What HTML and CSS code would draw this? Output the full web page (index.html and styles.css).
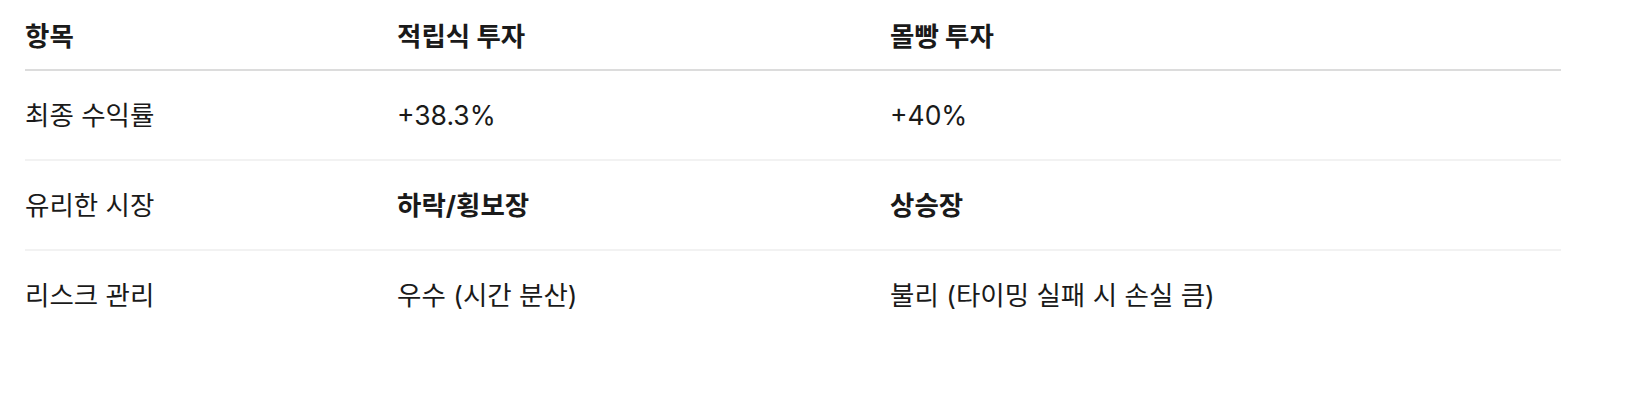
FILE: index.html
```html
<!DOCTYPE html>
<html lang="ko">
<head>
<meta charset="utf-8">
<link rel="stylesheet" href="styles.css">
</head>
<body>
<table class="cmp">
  <colgroup>
    <col class="c1"><col class="c2"><col class="c3">
  </colgroup>
  <thead>
    <tr><th>항목</th><th>적립식 투자</th><th>몰빵 투자</th></tr>
  </thead>
  <tbody>
    <tr><td>최종 수익률</td><td>+38.3%</td><td>+40%</td></tr>
    <tr><td>유리한 시장</td><td><strong>하락/횡보장</strong></td><td><strong>상승장</strong></td></tr>
    <tr><td>리스크 관리</td><td>우수 (시간 분산)</td><td>불리 (타이밍 실패 시 손실 큼)</td></tr>
  </tbody>
</table>
</body>
</html>
```
FILE: styles.css
```css
html, body {
  margin: 0;
  padding: 0;
  background: #fff;
}
body {
  padding: 0 0 0 25px;
  font-family: Inter, "Noto Sans CJK KR", sans-serif;
  font-size: 26.5px;
  color: #1a1a1a;
}
.cmp {
  border-collapse: collapse;
  table-layout: fixed;
  width: 1536px;
}
.c1 { width: 372px; }
.c2 { width: 493px; }
.c3 { width: 671px; }
.cmp th, .cmp td {
  text-align: left;
  padding: 0;
  line-height: 36px;
}
.cmp th {
  font-weight: 700;
  padding-top: 18px;
  padding-bottom: 15px;
  border-bottom: 2px solid #dcdcdc;
}
.cmp td {
  padding-top: 26px;
  padding-bottom: 26px;
  font-weight: 400;
}
.cmp tbody tr + tr td {
  border-top: 2px solid #f2f2f2;
}
.cmp strong {
  font-weight: 700;
}
```
